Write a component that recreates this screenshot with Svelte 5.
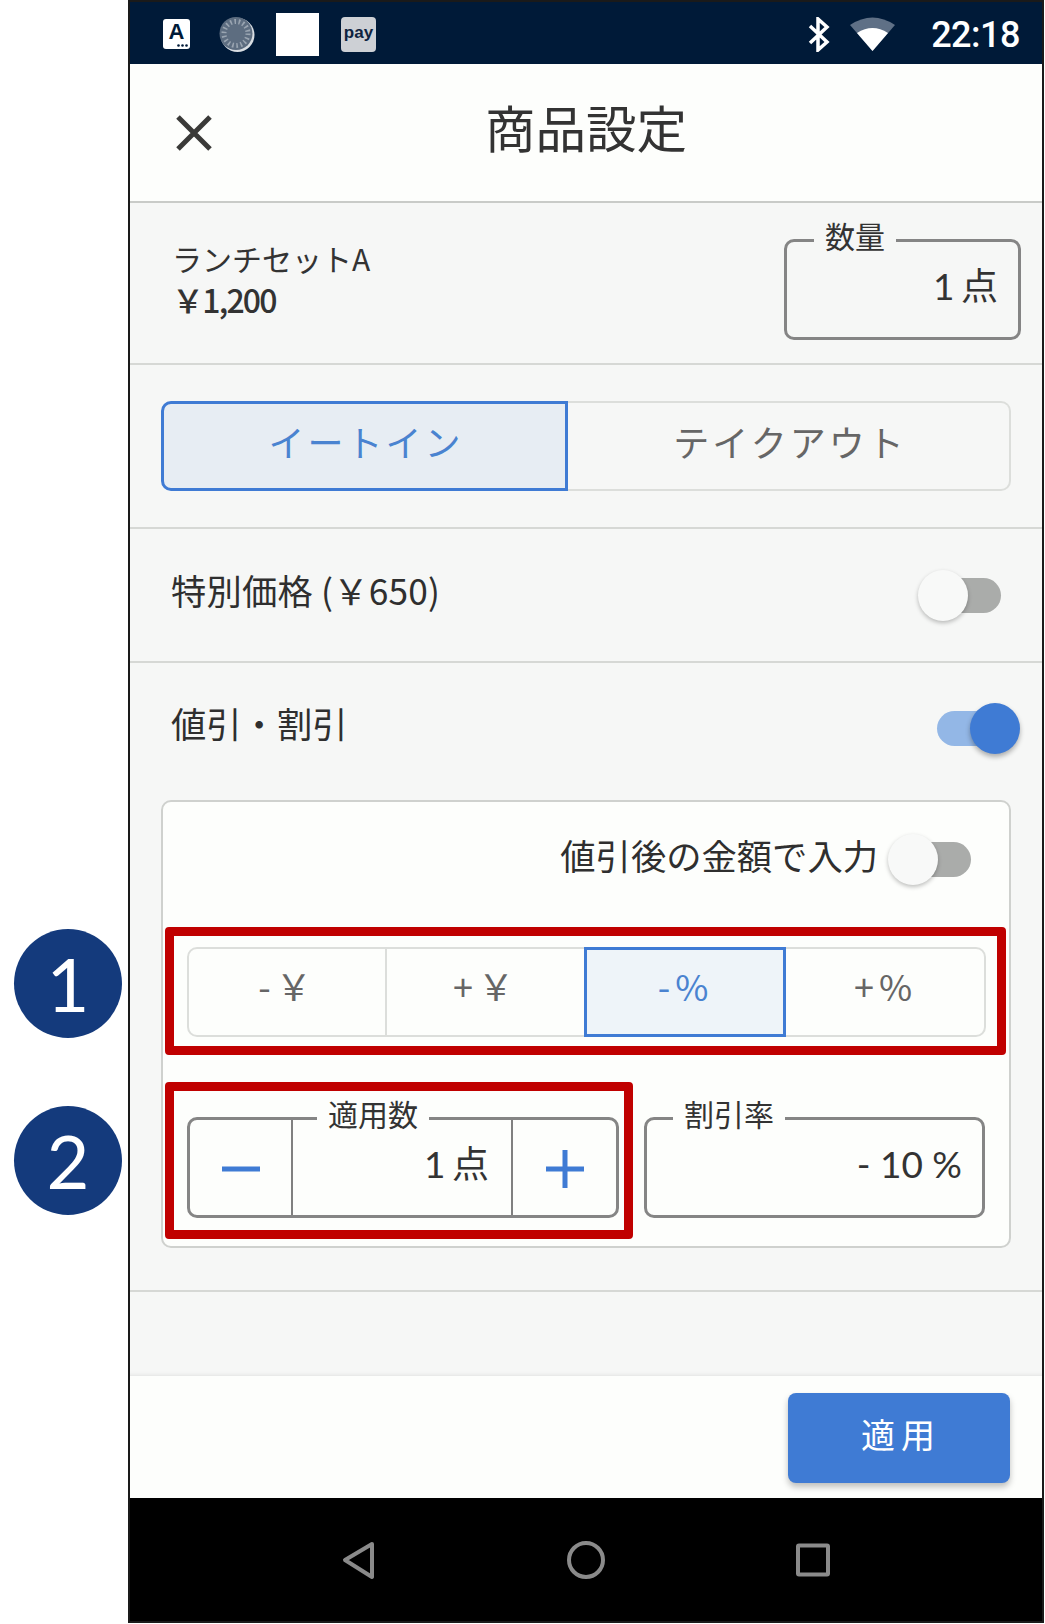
<script lang="ts">
	const modes = ['- ￥', '+ ￥', '- %', '+ %'];
	let mode = $state(2);
	let dineIn = $state(true);
</script>

{#snippet toggle(on: boolean)}
	<span class="toggle" class:on>
		<span class="track"></span>
		<span class="thumb"></span>
	</span>
{/snippet}

<div class="shot">
	<div class="badge badge-1">1</div>
	<div class="badge badge-2">2</div>

	<div class="phone">
		<div class="status">
			<span class="ic-a">
				A
				<svg viewBox="0 0 11 3" width="11" height="3">
					<circle cx="1.5" cy="1.5" r="1.3" />
					<circle cx="5.5" cy="1.5" r="1.3" />
					<circle cx="9.5" cy="1.5" r="1.3" />
				</svg>
			</span>
			<svg class="ic-disk" viewBox="0 0 36 35" width="36" height="35">
				<circle cx="18.5" cy="18" r="17" fill="#d8dde2" />
				<circle cx="17" cy="16.5" r="16.5" fill="#5d6d80" />
				<circle cx="17" cy="16.5" r="12" fill="none" stroke="#9aa5b1" stroke-width="5" stroke-dasharray="1.6 2.6" />
			</svg>
			<span class="ic-white"></span>
			<span class="ic-pay">pay</span>
			<svg class="ic-bt" viewBox="0 0 24 35" width="24" height="35">
				<path d="M3 9 L20 25 L11 33 V2 L20 10 L3 26" fill="none" stroke="#fff" stroke-width="3.5" />
			</svg>
			<svg class="ic-wifi" viewBox="0 0 45 34" width="45" height="34">
				<path d="M0 8 Q22.5 -7 45 8 L22.5 34 Z" fill="#5f7086" />
				<path d="M7 16 Q22.5 6 38 16 L22.5 34 Z" fill="#fff" />
			</svg>
			<span class="time">22:18</span>
		</div>

		<header class="head">
			<svg class="close" viewBox="0 0 36 36" width="36" height="36">
				<path d="M2 2 L34 34 M34 2 L2 34" fill="none" stroke="#3a3a38" stroke-width="5" />
			</svg>
			<h1>商品設定</h1>
		</header>

		<main class="body">
			<section class="info">
				<div class="item">
					<div class="item-name">ランチセットA</div>
					<div class="item-price">￥1,200</div>
				</div>
				<div class="field qty">
					<span class="legend">数量</span>
					<span class="value count">1 点</span>
				</div>
			</section>

			<section class="tabs-row">
				<div class="tabs">
					<button class="tab" class:active={dineIn} onclick={() => (dineIn = true)}><span>イートイン</span></button>
					<button class="tab" class:active={!dineIn} onclick={() => (dineIn = false)}><span>テイクアウト</span></button>
				</div>
			</section>

			<section class="row special">
				<span class="row-label wide">特別価格 (￥650)</span>
				{@render toggle(false)}
			</section>

			<section class="discount">
				<div class="row-head">
					<span class="row-label">値引・割引</span>
					{@render toggle(true)}
				</div>

				<div class="card">
					<div class="card-top">
						<span class="row-label">値引後の金額で入力</span>
						{@render toggle(false)}
					</div>

					<div class="mark mark-seg">
						<div class="seg">
							{#each modes as m, i}
								<button class="seg-btn" class:active={mode === i} onclick={() => (mode = i)}><span>{m}</span></button>
							{/each}
						</div>
					</div>

					<div class="inputs">
						<div class="mark mark-step">
							<div class="field stepper">
								<span class="legend">適用数</span>
								<span class="step-btn">
									<svg viewBox="0 0 38 6" width="38" height="6"><rect width="38" height="5" y="0.5" fill="#3f7bd4" /></svg>
								</span>
								<span class="value count">1 点</span>
								<span class="step-btn">
									<svg viewBox="0 0 38 38" width="38" height="38"><path d="M0 19 H38 M19 0 V38" stroke="#3f7bd4" stroke-width="5" /></svg>
								</span>
							</div>
						</div>
						<div class="field rate">
							<span class="legend">割引率</span>
							<span class="value">- 10 %</span>
						</div>
					</div>
				</div>
			</section>

			<div class="spacer"></div>
		</main>

		<footer class="foot">
			<button class="apply"><span>適用</span></button>
		</footer>

		<nav class="nav">
			<svg viewBox="0 0 38 40" width="38" height="40"><path d="M33 4 L6 20 L33 37 Z" fill="none" stroke="#8a8a8a" stroke-width="4" stroke-linejoin="round" /></svg>
			<svg viewBox="0 0 38 40" width="38" height="40"><circle cx="19" cy="20" r="17" fill="none" stroke="#8a8a8a" stroke-width="4" /></svg>
			<svg viewBox="0 0 38 40" width="38" height="40"><rect x="3" y="5.5" width="30" height="29" rx="1" fill="none" stroke="#8a8a8a" stroke-width="4" /></svg>
		</nav>
	</div>
</div>

<style>
	:global(body) {
		margin: 0;
		background: #fff;
	}

	.shot {
		position: relative;
		width: 1045px;
		height: 1624px;
		font-family: 'Noto Sans CJK JP', 'Noto Sans', sans-serif;
		color: #333;
		overflow: hidden;
	}

	/* Numbered callouts */
	.badge {
		position: absolute;
		left: 14px;
		width: 108px;
		height: 109px;
		border-radius: 50%;
		background: #143a7c;
		color: #fff;
		font-family: Lato, sans-serif;
		font-size: 74px;
		line-height: 109px;
		text-align: center;
	}

	.badge-1 {
		top: 929px;
	}

	.badge-2 {
		top: 1106px;
	}

	.phone {
		box-sizing: border-box;
		display: flex;
		flex-direction: column;
		margin-left: 128px;
		width: 916px;
		height: 1623px;
		border: 2px solid #1a1a1a;
	}

	/* Status bar */
	.status {
		flex: none;
		box-sizing: border-box;
		display: flex;
		align-items: center;
		height: 62px;
		padding: 2px 22px 0 33px;
		background: #001a38;
	}

	.ic-a {
		position: relative;
		box-sizing: border-box;
		width: 27px;
		height: 30px;
		border-radius: 3px;
		background: #fff;
		color: #001a38;
		font: 700 22px/25px 'Liberation Sans', sans-serif;
		text-align: center;
	}

	.ic-a svg {
		position: absolute;
		right: 2px;
		bottom: 2px;
		fill: #001a38;
	}

	.ic-disk {
		margin-left: 29px;
	}

	.ic-white {
		margin-left: 21px;
		width: 43px;
		height: 43px;
		background: #fff;
	}

	.ic-pay {
		margin-left: 22px;
		width: 35px;
		height: 35px;
		border-radius: 4px;
		background: #cdd0d5;
		color: #0e2340;
		font: 700 17px/32px 'Liberation Sans', sans-serif;
		text-align: center;
	}

	.ic-bt {
		margin-left: auto;
	}

	.ic-wifi {
		margin-left: 19px;
	}

	.time {
		margin-left: 36px;
		padding-top: 2px;
		color: #fff;
		font: 500 36px/1 Roboto, sans-serif;
		letter-spacing: -0.5px;
	}

	/* Title */
	.head {
		flex: none;
		display: grid;
		grid-template-columns: 1fr auto 1fr;
		align-items: center;
		height: 137px;
		padding-left: 46px;
		padding-right: 46px;
		background: #fdfefc;
		border-bottom: 2px solid #c9cbc8;
	}

	.head h1 {
		margin: 0 0 12px;
		font-size: 50.5px;
		font-weight: 400;
		line-height: 1.2;
	}

	.body {
		flex: 1;
		display: flex;
		flex-direction: column;
		background: #f6f7f6;
	}

	/* Item */
	.info {
		display: flex;
		justify-content: space-between;
		box-sizing: border-box;
		height: 162px;
		padding: 36px 21px 0 42px;
		border-bottom: 2px solid #d6d8d5;
	}

	.item-name {
		margin-top: -1px;
		font-size: 30px;
		line-height: 40px;
	}

	.item-price {
		font-size: 32px;
		line-height: 43px;
		font-weight: 500;
		letter-spacing: -1.8px;
	}

	.field {
		position: relative;
		box-sizing: border-box;
		display: flex;
		height: 101px;
		border: 3px solid #858585;
		border-radius: 10px;
	}

	.legend {
		position: absolute;
		top: -27px;
		padding: 0 11px;
		font-size: 30px;
		line-height: 40px;
		background: #f6f7f6;
	}

	.value {
		flex: 1;
		text-align: right;
		font-family: Lato, 'Noto Sans CJK JP', sans-serif;
		font-size: 37px;
		line-height: 88px;
		color: #333;
	}

	.count {
		word-spacing: -3px;
	}

	.qty {
		width: 237px;
		padding-right: 20px;
	}

	.qty .legend {
		left: 27px;
	}

	/* Eat-in / take-out */
	.tabs-row {
		box-sizing: border-box;
		height: 164px;
		padding: 36px 31px 0 31px;
		border-bottom: 2px solid #d6d8d5;
	}

	.tabs {
		display: flex;
		height: 90px;
	}

	.tab {
		flex: 1;
		margin: 0;
		padding: 0 0 10px 3px;
		border: 2px solid #dcdedb;
		background: transparent;
		font: inherit;
		font-size: 36px;
		letter-spacing: 3px;
		color: #666;
	}

	.tab:first-child {
		flex: none;
		width: 407px;
		border-radius: 10px 0 0 10px;
	}

	.tab:last-child {
		border-left: none;
		border-radius: 0 10px 10px 0;
	}

	.tab.active {
		border: 3px solid #3f7bd4;
		background: #e7edf3;
		color: #4a83d0;
	}

	.tab.active:first-child {
		border-radius: 10px 0 0 10px;
	}

	/* Rows */
	.row {
		display: flex;
		align-items: center;
		justify-content: space-between;
	}

	.row-label {
		margin-bottom: 10px;
		font-size: 35.3px;
		line-height: 40px;
		color: #2f2f2f;
	}

	.row-label.wide {
		letter-spacing: 0.2px;
	}

	.special {
		box-sizing: border-box;
		height: 134px;
		padding: 0 41px 0 41px;
		border-bottom: 2px solid #d6d8d5;
	}

	.toggle {
		position: relative;
		flex: none;
		display: block;
		width: 83px;
		height: 51px;
	}

	.track {
		position: absolute;
		top: 8px;
		right: 0;
		width: 62px;
		height: 35px;
		border-radius: 18px;
		background: #aaacaa;
	}

	.thumb {
		position: absolute;
		top: 0;
		left: 0;
		width: 50px;
		height: 51px;
		border-radius: 50%;
		background: #f8f9f8;
		box-shadow: 0 2px 4px rgba(0, 0, 0, 0.25);
	}

	.toggle.on .track {
		left: 0;
		right: auto;
		background: #93b7e6;
	}

	.toggle.on .thumb {
		left: auto;
		right: 0;
		background: #3f7bd4;
		box-shadow: 0 3px 5px rgba(0, 0, 0, 0.3);
	}

	/* Discount */
	.discount {
		box-sizing: border-box;
		padding: 0 31px 42px 31px;
		border-bottom: 2px solid #d6d8d5;
	}

	.row-head {
		box-sizing: border-box;
		display: flex;
		align-items: center;
		justify-content: space-between;
		height: 137px;
		margin-right: -9px;
		padding: 0 0 7px 10px;
	}

	.card {
		box-sizing: border-box;
		padding: 0 3px 7px 2px;
		background: #fdfefc;
		border: 2px solid #cfd1ce;
		border-radius: 10px;
	}

	.card-top {
		display: flex;
		align-items: center;
		justify-content: flex-end;
		gap: 10px;
		padding: 32px 35px 42px 0;
	}

	.mark {
		box-sizing: border-box;
		border: 9px solid #c00000;
		border-radius: 4px;
	}

	.mark-seg {
		padding: 11px 11px 9px 13px;
	}

	.seg {
		display: flex;
		height: 90px;
	}

	.seg-btn {
		flex: none;
		width: 201px;
		margin: 0 0 0 -2px;
		padding: 0 4px 14px 0;
		border: 2px solid #dcdedb;
		background: transparent;
		font: inherit;
		font-size: 36px;
		word-spacing: -3px;
		color: #666;
	}

	.seg-btn:first-child {
		width: 200px;
		margin-left: 0;
		border-radius: 10px 0 0 10px;
	}

	.seg-btn:last-child {
		flex: 1;
		border-radius: 0 10px 10px 0;
	}

	.seg-btn.active {
		position: relative;
		width: 202px;
		border: 3px solid #3f7bd4;
		background: #eef4f9;
		color: #4a83d0;
	}

	.inputs {
		display: flex;
		align-items: flex-start;
		gap: 11px;
		margin-top: 27px;
	}

	.inputs .legend {
		background: #fdfefc;
	}

	.mark-step {
		width: 468px;
		padding: 26px 5px 12px 13px;
	}

	.stepper .legend {
		left: 127px;
	}

	.step-btn {
		flex: none;
		display: flex;
		align-items: center;
		justify-content: center;
		width: 103px;
		padding-top: 2px;
		box-sizing: border-box;
	}

	.step-btn:nth-of-type(2) {
		border-right: 2px solid #808080;
	}

	.step-btn:last-child {
		width: 105px;
		border-left: 2px solid #808080;
	}

	.stepper .value {
		padding-right: 22px;
	}

	.rate {
		width: 341px;
		margin-top: 35px;
		padding-right: 20px;
	}

	.rate .legend {
		left: 26px;
	}

	.spacer {
		flex: 1;
		box-shadow: inset 0 -5px 5px -5px rgba(0, 0, 0, 0.12);
	}

	/* Footer */
	.foot {
		flex: none;
		box-sizing: border-box;
		display: flex;
		justify-content: flex-end;
		height: 122px;
		padding: 17px 32px 0 0;
		background: #fdfefc;
	}

	.apply {
		width: 222px;
		height: 90px;
		padding: 0 0 10px 4px;
		border: none;
		border-radius: 8px;
		background: #3f7bd4;
		color: #fff;
		font: inherit;
		font-size: 34px;
		letter-spacing: 6px;
		box-shadow: 0 4px 6px rgba(0, 0, 0, 0.25);
	}

	.nav {
		flex: none;
		height: 123px;
		display: flex;
		align-items: center;
		justify-content: center;
		gap: 190px;
		background: #000;
	}
</style>
